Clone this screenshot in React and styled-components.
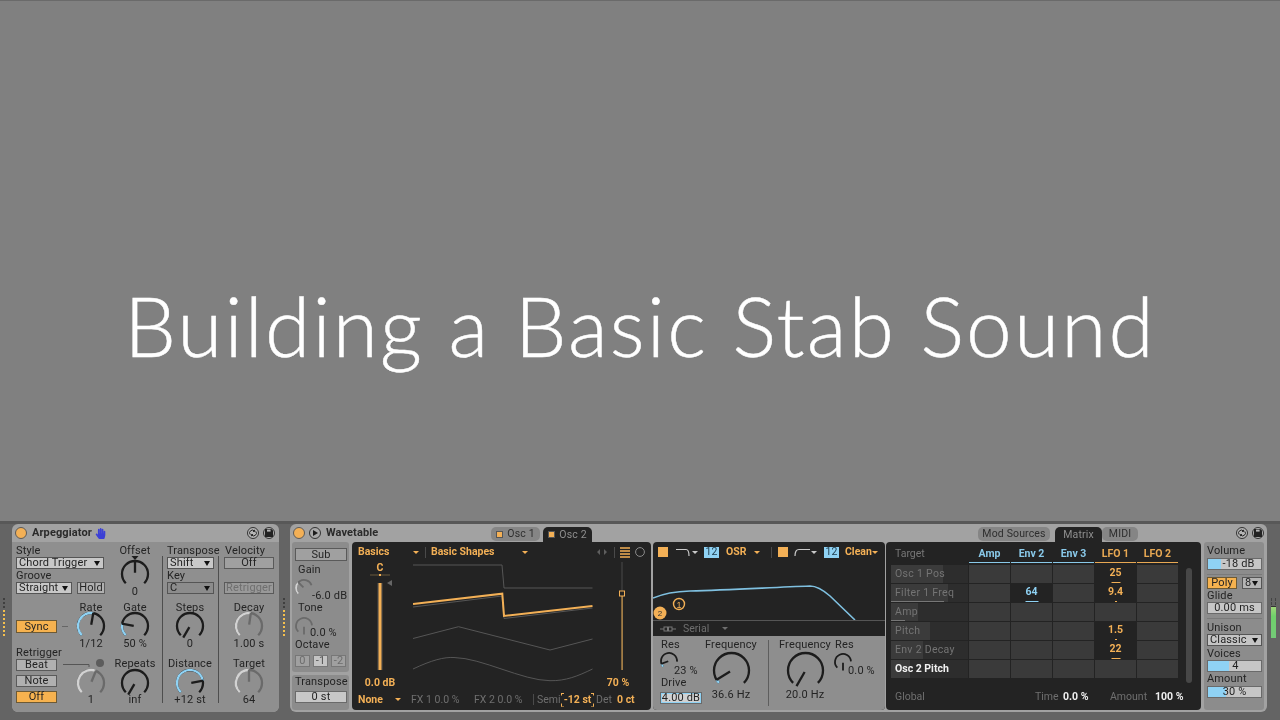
import React from "react";
import styled, { createGlobalStyle } from "styled-components";
import { FaHandPaper } from "react-icons/fa";

const ORANGE = "#f3b056";
const BLUE = "#8fd2f4";
const INK = "#1f1f1f";

const Global = createGlobalStyle`
  html, body { margin: 0; padding: 0; background: #808080; }
  body { width: 1280px; height: 720px; overflow: hidden; font-family: Roboto, "Liberation Sans", Arial, sans-serif; }
`;

const Page = styled.div`
  width: 1280px; height: 720px; display: flex; flex-direction: column;
  background: #808080; border-top: 1px solid #6a6a6a; box-sizing: border-box;
`;
const Hero = styled.div`
  height: 520px; display: flex; justify-content: center; align-items: flex-start; padding-top: 274px; box-sizing: border-box;
`;
const Title = styled.h1`
  margin: 0; font-family: Lato, sans-serif; font-weight: 300; font-size: 82px; line-height: 100px; color: #fff; letter-spacing: 2.15px; white-space: nowrap;
  -webkit-text-stroke: 0.5px #fff;
`;
const Rack = styled.div`
  height: 199px; display: flex; align-items: flex-start; background: #646464; border-top: 3px solid #585858;
  box-sizing: border-box; filter: blur(0.35px); color: ${INK}; font-size: 11px; letter-spacing: 0.15px; line-height: 12px;
`;
const GripSlot = styled.div`
  width: ${p => p.$w}px; padding: 74px 0 0 ${p => p.$pad}px; box-sizing: border-box; display: flex; flex-direction: column; gap: 2px;
`;
const GripDot = styled.i`
  display: block; width: 2px; height: 2px; background: ${p => (p.$on ? "#f4c04e" : "#3f3f3f")};
`;
const Device = styled.section`
  width: ${p => p.$w}px; height: 188px; flex: none; background: #a2a2a2; border-radius: 6px; display: flex; flex-direction: column; overflow: hidden;
`;
const Header = styled.header`
  height: 18px; flex: none; display: flex; align-items: center; padding: 0 ${p => p.$pr || 3}px 0 3px; position: relative;
`;
const Name = styled.span`
  font-weight: 700; font-size: 11px; letter-spacing: 0.1px; color: #2a2a2a; margin-left: ${p => p.$ml || 0}px; flex: none;
  width: ${p => (p.$w ? `${p.$w}px` : "auto")};
`;
const Power = styled.span`
  width: 12px; height: 12px; border-radius: 50%; background: ${ORANGE}; border: 1px solid #5a5a5a; box-sizing: border-box; flex: none;
`;
const RoundBtn = styled.span`
  width: 12px; height: 12px; border-radius: 50%; border: 1px solid #333; box-sizing: border-box; flex: none; background: #b4b4b4;
  display: flex; align-items: center; justify-content: center; margin-left: ${p => p.$ml || 0}px;
`;
const Spacer = styled.span`flex: 1;`;
const Tabs = styled.div`
  display: flex; align-items: flex-end; height: 15px; margin-top: 3px; margin-left: ${p => p.$ml || 0}px; gap: ${p => p.$gap ?? 3}px; font-size: 10.5px;
`;
const Tab = styled.span`
  width: ${p => p.$w}px; display: flex; align-items: center; justify-content: center; gap: 4px; box-sizing: border-box;
  border-radius: ${p => (p.$active ? "5px 5px 0 0" : "5px")}; background: ${p => (p.$active ? "#232323" : "#858585")};
  color: ${p => (p.$active ? "#8f8f8f" : "#2e2e2e")}; height: ${p => (p.$active ? 15 : 14)}px; margin-bottom: ${p => (p.$active ? 0 : 1)}px;
  margin-right: ${p => p.$mr || 0}px;
`;
const TabSquare = styled.i`
  width: 7px; height: 7px; background: ${ORANGE}; display: block; border: 1px solid #555; box-sizing: border-box;
`;

/* ---------- Arpeggiator ---------- */
const ArpBody = styled.div`
  flex: 1; background: #8f8f8f; padding: 3px 4px 0; display: grid;
  grid-template-columns: 53px 44px 44px 10px 46px 11px 50px;
  grid-template-rows: 57px 49px 7px 49px; align-content: start;
`;
const Cell = styled.div`
  grid-column: ${p => p.$col}; grid-row: ${p => p.$row}; display: flex; flex-direction: column; min-width: 0;
  align-items: ${p => p.$align || "stretch"}; padding-top: ${p => p.$pt || 0}px; gap: ${p => p.$gap || 0}px; margin-top: ${p => p.$mt || 0}px;
`;
const Divider = styled.div`
  grid-column: ${p => p.$col}; grid-row: 1 / 5; justify-self: center; width: 1px; margin: 11px 0 4px; background: #4e4e4e;
`;
const Row = styled.div`
  display: flex; align-items: center; gap: ${p => p.$gap || 0}px; margin-top: ${p => p.$mt || 0}px; margin-left: ${p => p.$ml || 0}px;
`;
const Text = styled.span`
  display: block; white-space: nowrap; height: 12px; line-height: 12px; color: ${p => p.$c || "#242424"}; text-align: ${p => p.$ta || "left"};
  margin-top: ${p => p.$mt || 0}px; margin-left: ${p => p.$ml || 0}px; flex: none;
`;
const Select = styled.div`
  width: ${p => p.$w}px; height: 12px; box-sizing: border-box; border: 1px solid #555; background: ${p => p.$bg || "#c8c8c8"};
  display: flex; align-items: center; justify-content: space-between; padding: 0 3px 0 2px; margin-top: ${p => p.$mt || 0}px; flex: none;
`;
const Arrow = styled.i`
  width: 0; height: 0; border-left: 3.5px solid transparent; border-right: 3.5px solid transparent; border-top: 5px solid #111; display: block;
`;
const Button = styled.div`
  width: ${p => p.$w}px; height: ${p => p.$h || 13}px; box-sizing: border-box; border: 1px solid ${p => (p.$on ? "#6d5a35" : "#5a5a5a")};
  background: ${p => (p.$on ? "#f6b24f" : p.$bg || "#b0b0b0")}; color: ${p => p.$c || "#242424"}; display: flex; align-items: center; justify-content: center;
  margin-top: ${p => p.$mt || 0}px; margin-left: ${p => p.$ml || 0}px; flex: none;
`;
const Wire = styled.svg`display: block; flex: none;`;

const polar = (c, r, d) => {
  const a = ((d - 90) * Math.PI) / 180;
  return [c + r * Math.cos(a), c + r * Math.sin(a)];
};
const arc = (c, r, a, b) => {
  const [x1, y1] = polar(c, r, a);
  const [x2, y2] = polar(c, r, b);
  return `M${x1} ${y1}A${r} ${r} 0 ${b - a > 180 ? 1 : 0} 1 ${x2} ${y2}`;
};
const KnobSvg = styled.svg`display: block; flex: none; overflow: visible;`;
function Knob({ r = 13, v = -135, tone = "dark", end = 135, sw = 2.3, lit = false, top = false }) {
  const size = Math.ceil(r * 2 + 2);
  const c = size / 2;
  const pal = tone === "dark"
    ? { on: BLUE, off: "#1c1c1c", needle: "#1c1c1c" }
    : { on: "#d2d2d2", off: "#6a6a6a", needle: "#6a6a6a" };
  const [nx, ny] = polar(c, r + 0.5, v);
  const [sx, sy] = polar(c, r * 0.1, v);
  return (
    <KnobSvg width={size} height={size}>
      <path d={arc(c, r, -135, end)} fill="none" stroke={pal.off} strokeWidth={sw} />
      {lit && <path d={arc(c, r, -135, Math.max(v, -135))} fill="none" stroke={pal.on} strokeWidth={sw} />}
      <line x1={sx} y1={sy} x2={nx} y2={ny} stroke={pal.needle} strokeWidth={sw} />
      {top && <path d={`M${c - 3.5} -4H${c + 3.5}L${c} 0Z`} fill="#1c1c1c" />}
    </KnobSvg>
  );
}
const KnobWrap = styled.div`
  display: flex; flex-direction: column; align-items: center; margin-top: ${p => p.$mt || 0}px; flex: none;
`;
const KnobCell = ({ col, row, label, value, gap = -2, after = -2, ...k }) => (
  <Cell $col={col} $row={row} $align="center">
    <Text>{label}</Text>
    <KnobWrap $mt={gap}><Knob {...k} /></KnobWrap>
    <Text $mt={after}>{value}</Text>
  </Cell>
);

function Grip() {
  return [0,1,2,3,4,5,6,7,8,9].map(i => <GripDot key={i} $on={i > 2} />);
}

const LinkIcon = () => (
  <svg width="8" height="8" viewBox="0 0 8 8"><path d="M1.2 5.6A2.6 2.6 0 0 1 5.6 2.2M5.6.8v1.6H4M6.8 2.4A2.6 2.6 0 0 1 2.4 5.8M2.4 7.2V5.6H4" fill="none" stroke="#222" strokeWidth="1"/></svg>
);
const SaveIcon = () => (
  <svg width="8" height="8" viewBox="0 0 8 8"><path d="M0 0h6.4L8 1.6V8H0z" fill="#222"/><rect x="2" y="0.6" width="3.6" height="2" fill="#b4b4b4"/></svg>
);

function Arp() {
  return (
    <Device $w={267}>
      <Header $pr={4}>
        <Power />
        <Name $ml={5}>Arpeggiator</Name>
        <FaHandPaper size={11} color="#3b3fd6" style={{ marginLeft: 3 }} />
        <Spacer />
        <RoundBtn><LinkIcon /></RoundBtn>
        <RoundBtn $ml={4}><SaveIcon /></RoundBtn>
      </Header>
      <ArpBody>
        <Cell $col="1 / 3" $row="1">
          <Text>Style</Text>
          <Select $w={88} $mt={0}>Chord Trigger<Arrow /></Select>
          <Text $mt={1}>Groove</Text>
          <Row $gap={5} $mt={0}>
            <Select $w={56}>Straight<Arrow /></Select>
            <Button $w={28} $h={12}>Hold</Button>
          </Row>
        </Cell>
        <KnobCell col="3" row="1" label="Offset" value="0" v={0} gap={3} after={-2} top />
        <Divider $col="4" />
        <Cell $col="5" $row="1">
          <Text>Transpose</Text>
          <Select $w={47}>Shift<Arrow /></Select>
          <Text $mt={1}>Key</Text>
          <Select $w={47} $bg="#8c8c8c">C<Arrow /></Select>
        </Cell>
        <Divider $col="6" />
        <Cell $col="7" $row="1">
          <Text $ml={1}>Velocity</Text>
          <Button $w={50} $h={12} $bg="#a0a0a0">Off</Button>
          <Button $w={50} $h={12} $bg="#999" $c="#6f6f6f" $mt={13}>Retrigger</Button>
        </Cell>

        <Cell $col="1" $row="2" $pt={18}>
          <Row>
            <Button $w={41} $on>Sync</Button>
            <Wire width="6" height="2" style={{ marginLeft: 5 }}><rect width="6" height="1" fill="#666" /></Wire>
          </Row>
        </Cell>
        <KnobCell col="2" row="2" label="Rate" value="1/12" v={10} lit />
        <KnobCell col="3" row="2" label="Gate" value="50 %" v={-80} lit />
        <KnobCell col="5" row="2" label="Steps" value="0" v={-150} />
        <KnobCell col="7" row="2" label="Decay" value="1.00 s" v={8} tone="light" lit />

        <Cell $col="1" $row="4" $gap={4}>
          <Text $mt={-11}>Retrigger</Text>
          <Button $w={41} $h={12}  $mt={-4}>Beat</Button>
          <Button $w={41} $h={12}>Note</Button>
          <Button $w={41} $h={12} $on>Off</Button>
        </Cell>
        <Cell $col="2" $row="4" $align="center">
          <Wire width="44" height="12" style={{ overflow: "visible" }}>
            <path d="M-6 6.5H20V9" fill="none" stroke="#555" />
            <circle cx="31" cy="5" r="4" fill="#5c5c5c" />
          </Wire>
          <KnobWrap $mt={-1}><Knob v={22} tone="light" lit /></KnobWrap>
          <Text $mt={-3}>1</Text>
        </Cell>
        <KnobCell col="3" row="4" label="Repeats" value="inf" v={-150} gap={-1} after={-3} />
        <KnobCell col="5" row="4" label="Distance" value="+12 st" v={80} gap={-1} after={-3} lit />
        <KnobCell col="7" row="4" label="Target" value="64" v={0} gap={-1} after={-3} tone="light" lit />
      </ArpBody>
    </Device>
  );
}

/* ---------- Wavetable ---------- */
const WaveBody = styled.div`
  flex: 1; display: flex; padding: 0 3px 2px 2px; min-height: 0;
`;
const LeftCol = styled.div`
  width: 57px; flex: none; display: flex; flex-direction: column; gap: 3px;
`;
const SidePanel = styled.div`
  background: #8c8c8c; border-radius: 3px; padding: ${p => p.$pad || "6px 3px 0"}; box-sizing: border-box; height: ${p => p.$h}px; display: flex; flex-direction: column;
`;
const SmallKnobRow = styled.div`
  display: flex; align-items: flex-start; height: ${p => p.$h || 25}px; margin-left: ${p => p.$ml || 0}px; flex: none;
`;
const KnobNudge = styled.div`margin-top: ${p => p.$mt || 0}px; flex: none;`;
const OctaveRow = styled.div`display: flex; gap: 3px; margin-top: 4px;`;
const OctaveBtn = styled.span`
  width: 15px; height: 12px; box-sizing: border-box; border: 1px solid #777; background: ${p => (p.$on ? "#c4c4c4" : "#a0a0a0")};
  color: ${p => (p.$on ? "#555" : "#6d6d6d")}; display: flex; align-items: center; justify-content: center;
`;
const Dark = styled.div`
  background: #232323; border-radius: ${p => p.$r || "4px"}; box-sizing: border-box; flex: none; width: ${p => p.$w}px; margin-left: ${p => p.$ml || 0}px;
  display: flex; flex-direction: column; overflow: hidden; color: #6f6f6f; font-size: 10.5px; letter-spacing: 0;
`;
const OscTop = styled.div`
  height: 20px; display: flex; align-items: center; padding: 0 6px; flex: none;
`;
const Amber = styled.span`
  color: ${ORANGE}; font-weight: 700; white-space: nowrap; width: ${p => (p.$w ? `${p.$w}px` : "auto")}; margin-left: ${p => p.$ml || 0}px; flex: none;
  text-align: ${p => p.$ta || "left"};
`;
const Muted = styled.span`
  color: #6f6f6f; white-space: nowrap; width: ${p => (p.$w ? `${p.$w}px` : "auto")}; margin-left: ${p => p.$ml || 0}px; flex: none;
`;
const Caret = styled.i`
  width: 0; height: 0; border-left: 3px solid transparent; border-right: 3px solid transparent; border-top: 3.5px solid ${p => p.$c || ORANGE};
  display: block; flex: none; margin-left: ${p => p.$ml || 0}px;
`;
const VRule = styled.i`
  width: 1px; height: 11px; background: #4a4a4a; display: block; flex: none; margin-left: ${p => p.$ml || 0}px;
`;
const OscMid = styled.div`flex: none; height: 129px; display: flex;`;
const LevelCol = styled.div`
  width: 56px; flex: none; display: flex; flex-direction: column; align-items: center; margin-right: 5px;
`;
const PosCol = styled.div`
  width: 58px; flex: none; display: flex; flex-direction: column; align-items: center;
`;
const OscBottom = styled.div`
  height: 17px; display: flex; align-items: center; padding-left: 6px; flex: none;
`;
const Bracket = styled.span`
  position: relative; width: 29px; margin-left: 5px; flex: none; color: ${ORANGE}; font-weight: 700; height: 14px; line-height: 14px; text-align: center; white-space: nowrap;
  &::before, &::after {
    content: ""; position: absolute; top: 0; bottom: 0; width: 3px; border: 1px solid ${ORANGE}; box-sizing: border-box;
    clip-path: polygon(0 0, 100% 0, 100% 3px, 0 3px, 0 11px, 100% 11px, 100% 100%, 0 100%);
  }
  &::before { left: -2px; border-right: 0; }
  &::after { right: -2px; border-left: 0; }
`;
const WaveSvg = styled.svg`display: block; flex: none;`;

function Osc() {
  return (
    <Dark $w={299} $ml={3}>
      <OscTop>
        <Amber $w={55}>Basics</Amber>
        <Caret />
        <VRule $ml={6} />
        <Amber $ml={5} $w={91}>Basic Shapes</Amber>
        <Caret />
        <Spacer />
        <svg width="12" height="6" style={{ marginRight: 6 }}><path d="M4 0v6L1 3zM8 0v6l3-3z" fill="#5e5e5e" /></svg>
        <VRule />
        <svg width="10" height="11" style={{ marginLeft: 5 }}><path d="M0 1h10M0 4h10M0 7h10M0 10h10" stroke={ORANGE} strokeWidth="1.3" /></svg>
        <svg width="10" height="10" style={{ marginLeft: 5 }}><circle cx="5" cy="5" r="4.4" fill="none" stroke="#8a8a8a" /></svg>
      </OscTop>
      <OscMid>
        <LevelCol>
          <Amber style={{ lineHeight: "12px" }}>C</Amber>
          <WaveSvg width="30" height="100" style={{ overflow: "visible" }}>
            <path d="M5 1H25" stroke="#6b5a3c" />
            <rect x="14" y="0" width="2" height="2" fill={ORANGE} />
            <rect x="12" y="9" width="6" height="87" fill="#3a3a3a" />
            <rect x="13.5" y="9" width="3" height="87" fill={ORANGE} />
            <path d="M27 6v6l-5-3z" fill="#666" />
          </WaveSvg>
          <Amber style={{ marginTop: 3 }}>0.0 dB</Amber>
        </LevelCol>
        <WaveSvg width="180" height="125" viewBox="413 560 180 125" style={{ marginTop: -2 }}>
          <g fill="none" stroke="#565656" strokeWidth="1">
            <path d="M413 565H502L504 588H592.5" />
            <path d="M413 607L502 596L504 618.5L592.5 608" />
            <path d="M413 638.5L458.5 626.7L550 650L592.5 639" />
            <path d="M413 669C432 660 444 657 454 657.5C482 658 522 680.5 550 680.7C566 681 578 676 592.5 669" />
          </g>
          <path d="M413 604L502.3 593.7L504 616L592.5 606" fill="none" stroke={ORANGE} strokeWidth="2" />
        </WaveSvg>
        <PosCol>
          <WaveSvg width="10" height="110">
            <rect x="4.5" width="1" height="33" fill="#4a4a4a" />
            <rect x="4.3" y="33" width="1.6" height="75" fill="#b0874a" />
            <rect x="2.5" y="29" width="5" height="5" fill="#232323" stroke={ORANGE} />
          </WaveSvg>
          <Amber style={{ marginTop: 5, marginRight: 8 }}>70 %</Amber>
        </PosCol>
      </OscMid>
      <OscBottom>
        <Amber $w={37}>None</Amber>
        <Caret />
        <Muted $ml={10} $w={63}>FX 1 0.0 %</Muted>
        <Muted $w={59}>FX 2 0.0 %</Muted>
        <VRule />
        <Muted $ml={3} $w={21}>Semi</Muted>
        <Bracket>-12 st</Bracket>
        <Muted $ml={4} $w={21}>Det</Muted>
        <Amber>0 ct</Amber>
      </OscBottom>
    </Dark>
  );
}

const FilterTop = styled.div`height: 20px; display: flex; align-items: center; padding-left: 5px; flex: none;`;
const Square = styled.i`
  width: 10px; height: 10px; background: ${ORANGE}; display: block; flex: none; margin-left: ${p => p.$ml || 0}px;
`;
const Badge = styled.span`
  width: 15px; height: 11px; background: ${BLUE}; color: #1c3a4a; display: flex; align-items: center; justify-content: center; flex: none; margin-left: ${p => p.$ml || 0}px;
`;
const SerialRow = styled.div`
  height: 16px; border-top: 1px solid #555; box-sizing: border-box; display: flex; align-items: center; padding-left: 7px; flex: none; color: #6f6f6f;
`;
const FilterBottom = styled.div`
  flex: 1; background: #8e8e8e; display: flex; padding: 3px 0 0 7px; color: #242424; font-size: 11px; letter-spacing: 0.15px;
`;
const FCol = styled.div`
  width: ${p => p.$w}px; margin-left: ${p => p.$ml || 0}px; flex: none; display: flex; flex-direction: column; align-items: ${p => p.$align || "flex-start"};
`;
const FSep = styled.i`
  width: 1px; background: #5e5e5e; display: block; margin: 1px 0 4px 10px; flex: none;
`;
const Drive = styled.div`
  width: 42px; height: 12px; background: #d2d2d2; border: 1px solid #6a6a6a; box-sizing: border-box; display: flex; align-items: center; justify-content: center;
  box-shadow: inset 0 0 0 1px ${BLUE};
`;

function Filter() {
  return (
    <Dark $w={232} $ml={2}>
      <FilterTop>
        <Square />
        <svg width="16" height="10" style={{ marginLeft: 8 }}><path d="M0 2.5H10Q13 2.5 13 9" fill="none" stroke="#c9c9c9" strokeWidth="1.2" /></svg>
        <Caret $c="#c9c9c9" />
        <Badge $ml={6}>12</Badge>
        <Amber $ml={7} $w={28}>OSR</Amber>
        <Caret />
        <VRule $ml={11} />
        <Square $ml={6} />
        <svg width="16" height="10" style={{ marginLeft: 6 }}><path d="M1 9Q1 2.5 5 2.5H16" fill="none" stroke="#c9c9c9" strokeWidth="1.2" /></svg>
        <Caret $c="#c9c9c9" $ml={1} />
        <Badge $ml={7}>12</Badge>
        <Amber $ml={6}>Clean</Amber>
        <Caret />
      </FilterTop>
      <WaveSvg width="232" height="58" viewBox="653 562 232 58">
        <path d="M653 598C665 593 675 591.5 690 591C730 590 770 587.5 810 586C816 586 822 589 830 596L855 620" fill="none" stroke="#7fc0e0" strokeWidth="1.6" />
        <circle cx="679" cy="604" r="5.5" fill="#232323" stroke={ORANGE} strokeWidth="1.4" />
        <text x="679" y="607.5" textAnchor="middle" fontSize="9" fill={ORANGE} fontFamily="Liberation Sans">1</text>
        <circle cx="660" cy="613" r="6.5" fill={ORANGE} />
        <text x="660" y="616" textAnchor="middle" fontSize="8" fill="#333" fontFamily="Liberation Sans">2</text>
      </WaveSvg>
      <SerialRow>
        <svg width="16" height="6"><path d="M0 3H16" stroke="#777" /><rect x="4" y="1" width="3.5" height="4" fill="#232323" stroke="#777" /><rect x="8.5" y="1" width="3.5" height="4" fill="#232323" stroke="#777" /></svg>
        <Muted $ml={7} $w={39}>Serial</Muted>
        <Caret $c="#6f6f6f" />
      </SerialRow>
      <FilterBottom>
        <FCol $w={44}>
          <Text $ml={1}>Res</Text>
          <SmallKnobRow $h={27}>
            <KnobNudge $mt={1}><Knob r={8} v={-110} sw={1.8} end={95} lit /></KnobNudge>
            <Text $mt={14} style={{ marginLeft: -4 }}>23 %</Text>
          </SmallKnobRow>
          <Text $mt={-1} $ml={1}>Drive</Text>
          <Drive style={{ marginTop: 3 }}>4.00 dB</Drive>
        </FCol>
        <FCol $w={54} $align="center">
          <Text>Frequency</Text>
          <KnobWrap $mt={1}><Knob r={17.5} v={-122} lit /></KnobWrap>
          <Text $mt={0}>36.6 Hz</Text>
        </FCol>
        <FSep />
        <FCol $w={60} $ml={6} $align="center">
          <Text>Frequency</Text>
          <KnobWrap $mt={1}><Knob r={17.5} v={-150} /></KnobWrap>
          <Text $mt={0}>20.0 Hz</Text>
        </FCol>
        <FCol $w={40}>
          <Text>Res</Text>
          <SmallKnobRow $h={27} $ml={-1}>
            <KnobNudge $mt={2}><Knob r={8} v={180} sw={1.8} end={85} /></KnobNudge>
            <Text $mt={14} style={{ marginLeft: -4 }}>0.0 %</Text>
          </SmallKnobRow>
        </FCol>
      </FilterBottom>
    </Dark>
  );
}

const MatrixWrap = styled.div`display: flex; flex: none; height: 137px; padding-left: 5px;`;
const MatrixGrid = styled.div`
  display: grid; grid-template-columns: 77px repeat(5, 41px); grid-template-rows: 22px repeat(6, 18px); gap: 1px; flex: none;
`;
const Head = styled.div`
  color: ${p => p.$c}; font-weight: 700; border-bottom: 1.5px solid ${p => p.$c}; text-align: center; height: 21px; line-height: 24px; opacity: .95; box-sizing: border-box;
`;
const TargetHead = styled.div`padding: 6px 0 0 4px; color: #777; height: 17px;`;
const RowLabel = styled.div`
  position: relative; background: #2d2d2d; line-height: 18px; padding-left: 4px; white-space: nowrap; color: ${p => (p.$sel ? "#f0f0f0" : "#747474")}; font-weight: ${p => (p.$sel ? 700 : 400)};
  overflow: hidden; letter-spacing: ${p => (p.$sel ? 0 : 0.3)}px;
`;
const RowFill = styled.i`
  position: absolute; left: 0; top: 0; bottom: 0; background: #3b3b3b;
`;
const RowText = styled.span`position: relative;`;
const RowLine = styled.i`
  position: absolute; left: 0; bottom: 0; height: 1px; background: #777;
`;
const MCell = styled.div`
  position: relative; background: ${p => (p.$v ? "#232323" : "#3a3a3a")}; color: ${p => p.$c}; font-weight: 700; text-align: center; line-height: 15px;
`;
const MBar = styled.i`
  position: absolute; bottom: 0; left: 50%; height: 1.5px; background: ${p => p.$c}; transform: translateX(-50%);
`;
const Scroll = styled.i`
  width: 6px; height: 115px; margin: 26px 0 0 8px; background: #474747; border-radius: 3px; display: block; flex: none;
`;
const GlobalRow = styled.div`
  display: flex; align-items: center; height: 14px; margin-top: 11px; padding-left: 9px;
`;
const White = styled.span`color: #eee; font-weight: 700; margin-left: ${p => p.$ml || 0}px; width: ${p => (p.$w ? `${p.$w}px` : "auto")}; flex: none; white-space: nowrap;`;

const rows = [
  { name: "Osc 1 Pos", fill: 52, cells: { 3: "25" }, bars: { 3: 9 } },
  { name: "Filter 1 Freq", fill: 57, line: 53, cells: { 1: "64", 3: "9.4" }, bars: { 1: 13, 3: 2 } },
  { name: "Amp", fill: 27, line: 14, cells: {}, bars: {} },
  { name: "Pitch", fill: 39, cells: { 3: "1.5" }, bars: { 3: 2 } },
  { name: "Env 2 Decay", fill: 32, cells: { 3: "22" }, bars: { 3: 9 } },
  { name: "Osc 2 Pitch", fill: 19, sel: true, cells: {}, bars: {} },
];
const heads = [["Amp", BLUE], ["Env 2", BLUE], ["Env 3", BLUE], ["LFO 1", ORANGE], ["LFO 2", ORANGE]];

function Matrix() {
  return (
    <Dark $w={315} $ml={1}>
      <MatrixWrap>
        <MatrixGrid>
          <TargetHead>Target</TargetHead>
          {heads.map(([h, c]) => <Head key={h} $c={c}>{h}</Head>)}
          {rows.map(r => (
            <React.Fragment key={r.name}>
              <RowLabel $sel={r.sel}>
                <RowFill style={{ width: r.fill }} />
                {r.line && <RowLine style={{ width: r.line }} />}
                <RowText>{r.name}</RowText>
              </RowLabel>
              {[0, 1, 2, 3, 4].map(i => {
                const c = i === 1 ? BLUE : ORANGE;
                return (
                  <MCell key={i} $v={r.cells[i]} $c={c}>
                    {r.cells[i]}
                    {r.bars[i] && <MBar $c={c} style={{ width: r.bars[i] }} />}
                  </MCell>
                );
              })}
            </React.Fragment>
          ))}
        </MatrixGrid>
        <Scroll />
      </MatrixWrap>
      <GlobalRow>
        <Muted $w={140}>Global</Muted>
        <Muted $w={28}>Time</Muted>
        <White $w={47}>0.0 %</White>
        <Muted $w={45}>Amount</Muted>
        <White>100 %</White>
      </GlobalRow>
    </Dark>
  );
}

const RightPanel = styled.div`
  width: 60px; flex: none; margin-left: 3px; background: #8c8c8c; border-radius: 3px; padding: 3px 2px 0 3px; box-sizing: border-box; display: flex; flex-direction: column;
`;
const Slider = styled.div`
  position: relative; width: 55px; height: 12px; box-sizing: border-box; border: 1px solid #6a6a6a; background: #c6c6c6; text-align: center; line-height: 10px; margin-top: ${p => p.$mt || 0}px; flex: none;
`;
const SliderFill = styled.i`position: absolute; left: 0; top: 0; bottom: 0; background: ${BLUE};`;
const SliderText = styled.span`position: relative; display: block; padding-left: ${p => p.$pl || 0}px;`;
const HLine = styled.i`display: block; height: 1px; background: #7a7a7a; margin: ${p => p.$m}; flex: none;`;
const Meter = styled.div`
  width: 6px; margin: 74px 0 0 3px; height: 40px; flex: none; display: flex; flex-direction: column; gap: 1px; align-items: center;
`;
const MeterTick = styled.i`display: block; width: 5px; height: 3px; border-left: 1px solid #444; border-right: 1px solid #444; box-sizing: border-box;`;
const MeterBar = styled.i`display: block; width: 5px; flex: 1; background: linear-gradient(#9fd67a, #6fd06a 30%, #74c978); border-top: 1px solid #333;`;

function Right() {
  return (
    <RightPanel>
      <Text>Volume</Text>
      <Slider $mt={1}><SliderFill style={{ width: 13 }} /><SliderText $pl={8}>-18 dB</SliderText></Slider>
      <HLine $m="4px 0 2px" />
      <Row $gap={5}><Button $w={30} $h={12} $on>Poly</Button><Select $w={20} $bg="#b4b4b4">8<Arrow /></Select></Row>
      <Text $mt={1}>Glide</Text>
      <Slider><SliderText>0.00 ms</SliderText></Slider>
      <HLine $m="4px 0 1px" />
      <Text $mt={2}>Unison</Text>
      <Select $w={55} $bg="#c4c4c4">Classic<Arrow /></Select>
      <Text $mt={2}>Voices</Text>
      <Slider><SliderFill style={{ width: 21 }} /><SliderText $pl={2}>4</SliderText></Slider>
      <Text $mt={1}>Amount</Text>
      <Slider $mt={1}><SliderFill style={{ width: 18 }} /><SliderText>30 %</SliderText></Slider>
    </RightPanel>
  );
}

function Wavetable() {
  return (
    <Device $w={977}>
      <Header>
        <Power />
        <RoundBtn $ml={4} style={{ background: "#a8a8a8" }}>
          <svg width="6" height="6"><path d="M1 0L6 3L1 6z" fill="#1c1c1c" /></svg>
        </RoundBtn>
        <Name $ml={5} $w={165}>Wavetable</Name>
        <Tabs>
          <Tab $w={49}><TabSquare />Osc 1</Tab>
          <Tab $w={49} $active><TabSquare />Osc 2</Tab>
        </Tabs>
        <Tabs $ml={386} $gap={0}>
          <Tab $w={72} $mr={5}>Mod Sources</Tab>
          <Tab $w={47} $active>Matrix</Tab>
          <Tab $w={36}>MIDI</Tab>
        </Tabs>
        <Spacer />
        <RoundBtn><LinkIcon /></RoundBtn>
        <RoundBtn $ml={4}><SaveIcon /></RoundBtn>
      </Header>
      <WaveBody>
        <LeftCol>
          <SidePanel $h={130}>
            <Button $w={52} $h={13} $bg="#a0a0a0">Sub</Button>
            <Text $mt={3} $ml={3}>Gain</Text>
            <SmallKnobRow $h={25}>
              <KnobNudge $mt={3}><Knob r={8} v={-45} sw={1.8} end={70} tone="light" lit /></KnobNudge>
              <Text $mt={14} style={{ marginLeft: -1 }}>-6.0 dB</Text>
            </SmallKnobRow>
            <Text $mt={1} $ml={3}>Tone</Text>
            <SmallKnobRow $h={24}>
              <KnobNudge $mt={3}><Knob r={8} v={180} sw={1.8} end={85} tone="light" /></KnobNudge>
              <Text $mt={13} style={{ marginLeft: -3 }}>0.0 %</Text>
            </SmallKnobRow>
            <Text $mt={1}>Octave</Text>
            <OctaveRow>
              <OctaveBtn>0</OctaveBtn><OctaveBtn $on>-1</OctaveBtn><OctaveBtn>-2</OctaveBtn>
            </OctaveRow>
          </SidePanel>
          <SidePanel $h={35} $pad="1px 3px 0">
            <Text>Transpose</Text>
            <Slider $mt={3} style={{ width: 52, background: "#c8c8c8" }}><SliderText>0 st</SliderText></Slider>
          </SidePanel>
        </LeftCol>
        <Osc />
        <Filter />
        <Matrix />
        <Right />
      </WaveBody>
    </Device>
  );
}

export default function App() {
  return (
    <Page>
      <Global />
      <Hero><Title>Building a Basic Stab Sound</Title></Hero>
      <Rack>
        <GripSlot $w={12} $pad={3}><Grip /></GripSlot>
        <Arp />
        <GripSlot $w={11} $pad={4}><Grip /></GripSlot>
        <Wavetable />
        <Meter>
          <MeterTick /><MeterTick /><MeterBar />
        </Meter>
      </Rack>
    </Page>
  );
}
